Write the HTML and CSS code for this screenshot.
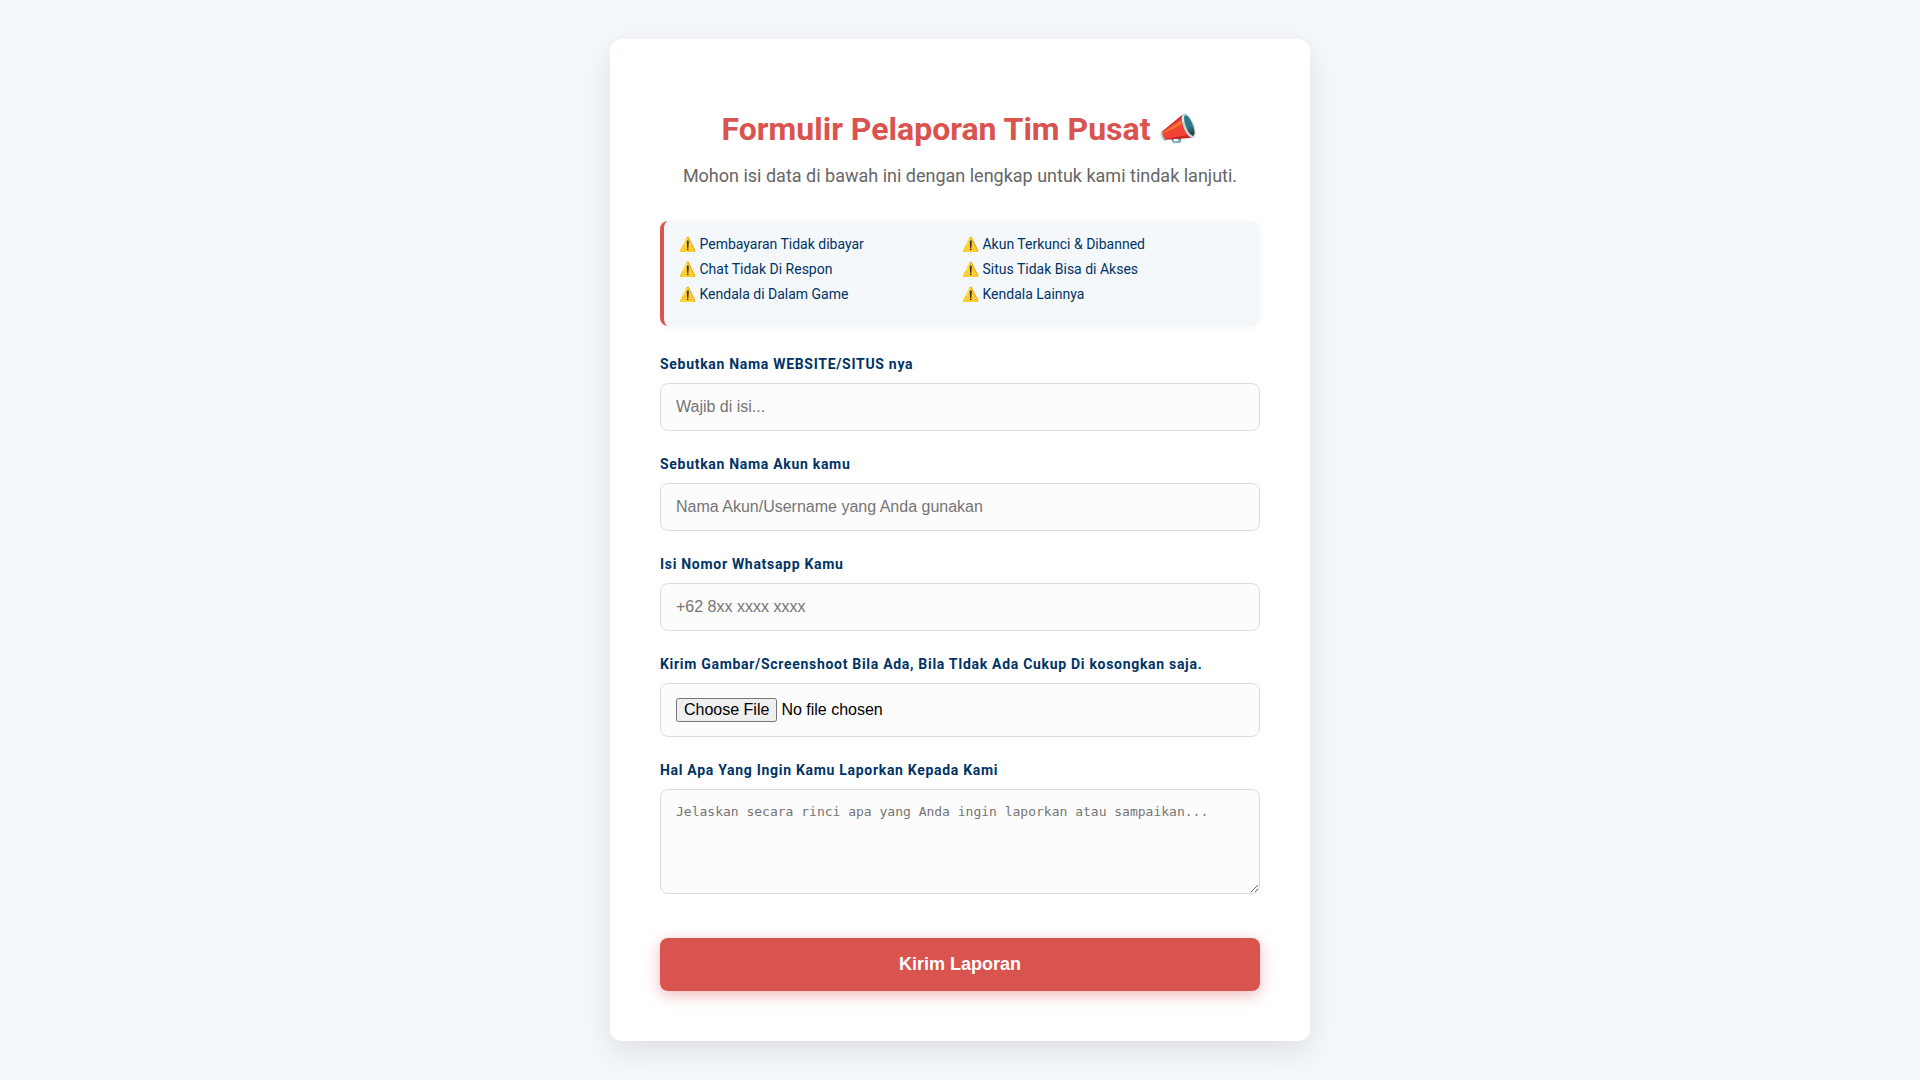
FILE: index.html
```
<!DOCTYPE html>
<html lang="id">
<head>
<meta charset="utf-8">
<meta name="viewport" content="width=device-width, initial-scale=1">
<title>Formulir Pelaporan Tim Pusat</title>
<link rel="stylesheet" href="styles.css">
</head>
<body>
<main class="card">
  <h1 class="title">Formulir Pelaporan Tim Pusat 📣</h1>
  <p class="subtitle">Mohon isi data di bawah ini dengan lengkap untuk kami tindak lanjuti.</p>
  <ul class="issues">
    <li class="issue">⚠️ Pembayaran Tidak dibayar</li>
    <li class="issue">⚠️ Akun Terkunci &amp; Dibanned</li>
    <li class="issue">⚠️ Chat Tidak Di Respon</li>
    <li class="issue">⚠️ Situs Tidak Bisa di Akses</li>
    <li class="issue">⚠️ Kendala di Dalam Game</li>
    <li class="issue">⚠️ Kendala Lainnya</li>
  </ul>
  <form class="form">
    <div class="field">
      <label class="label" for="website">Sebutkan Nama WEBSITE/SITUS nya</label>
      <input class="control" type="text" id="website" placeholder="Wajib di isi...">
    </div>
    <div class="field">
      <label class="label" for="account">Sebutkan Nama Akun kamu</label>
      <input class="control" type="text" id="account" placeholder="Nama Akun/Username yang Anda gunakan">
    </div>
    <div class="field">
      <label class="label" for="whatsapp">Isi Nomor Whatsapp Kamu</label>
      <input class="control" type="tel" id="whatsapp" placeholder="+62 8xx xxxx xxxx">
    </div>
    <div class="field">
      <label class="label" for="image">Kirim Gambar/Screenshoot Bila Ada, Bila TIdak Ada Cukup Di kosongkan saja.</label>
      <input class="control" type="file" id="image" accept="image/*">
    </div>
    <div class="field">
      <label class="label" for="report">Hal Apa Yang Ingin Kamu Laporkan Kepada Kami</label>
      <textarea class="control control-area" id="report" placeholder="Jelaskan secara rinci apa yang Anda ingin laporkan atau sampaikan..."></textarea>
    </div>
    <button class="submit" type="submit">Kirim Laporan</button>
  </form>
</main>
</body>
</html>
```
FILE: styles.css
```
* {
  box-sizing: border-box;
}

body {
  display: flex;
  align-items: center;
  justify-content: center;
  min-height: 100vh;
  margin: 0;
  padding: 20px;
  background: #f4f8fb;
  color: #003366;
  font-family: Roboto, sans-serif;
}

.card {
  width: 100%;
  max-width: 700px;
  padding: 70px 50px 50px;
  background: #fff;
  border-radius: 12px;
  box-shadow: 0 10px 30px rgba(0, 0, 0, 0.1);
}

.title {
  margin: 0 0 12px;
  color: #d9534f;
  font-size: 32px;
  line-height: 40px;
  text-align: center;
}

.subtitle {
  margin: 0 0 30px;
  color: #666;
  font-size: 18px;
  line-height: 30px;
  text-align: center;
}

.issues {
  display: grid;
  grid-template-columns: 1fr 1fr;
  margin: 0 0 29px;
  padding: 15px;
  border-left: 4px solid #d9534f;
  border-radius: 8px;
  background: #f4f8fb;
  box-shadow: 0 2px 8px rgba(0, 0, 0, 0.03);
  list-style: none;
}

.issue {
  margin-bottom: 8px;
  font-size: 14px;
  line-height: 17px;
}

.form {
  display: flex;
  flex-direction: column;
  gap: 24px;
}

.field {
  display: flex;
  flex-direction: column;
  gap: 9px;
}

.label {
  font-size: 14px;
  font-weight: 700;
  line-height: 19px;
  letter-spacing: 0.05em;
}

.control {
  width: 100%;
  padding: 14px 15px;
  border: 1px solid #ddd;
  border-radius: 8px;
  background: #fcfcfc;
  color: #000;
  font-family: "Liberation Sans", sans-serif;
  font-size: 16px;
}

.control-area {
  height: 105px;
  font-family: "DejaVu Sans Mono", monospace;
  font-size: 13px;
  resize: vertical;
}

.submit {
  margin-top: 20px;
  padding: 16px;
  border: 0;
  border-radius: 8px;
  background: #d9534f;
  box-shadow: 0 4px 15px rgba(217, 83, 79, 0.4);
  color: #fff;
  font-family: "Liberation Sans", sans-serif;
  font-size: 18px;
  font-weight: 700;
  line-height: 21px;
}
```
